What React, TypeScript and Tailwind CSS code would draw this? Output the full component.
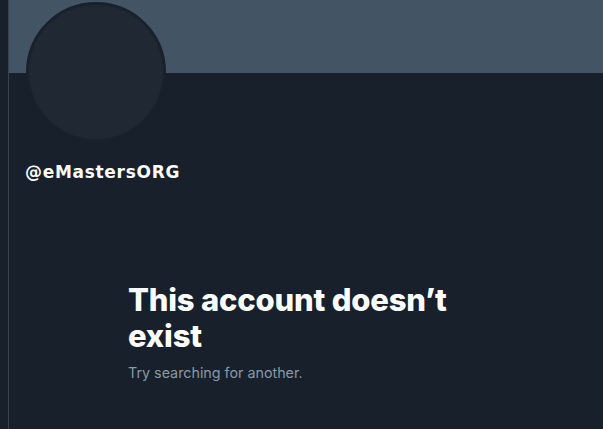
import React from 'react';

export default function App() {
  return (
    <div
      className="flex h-[429px] w-[603px] overflow-hidden bg-[#17202b] text-white"
      style={{ fontFamily: 'Inter, "Noto Sans", sans-serif' }}
    >
      <div className="w-[9px] shrink-0 border-r border-[#38444d] bg-[#17202b]" />
      <div className="flex flex-1 flex-col">
        <div className="h-[73px] bg-[#435565]" />
        <div className="ml-[17px] -mt-[71px] h-[140px] w-[140px] rounded-full border-[3px] border-[#18212c] bg-[#202833]" />
        <div
          className="ml-[16px] mt-[20px] text-[17px] font-bold leading-[20px] tracking-[0.7px]"
          style={{ fontFamily: '"DejaVu Sans", sans-serif' }}
        >
          @eMastersORG
        </div>
        <div className="ml-[119px] mt-[100px] w-[340px]">
          <h1 className="text-[31px] font-extrabold leading-[36px] tracking-[-0.2px]">This account doesn’t exist</h1>
          <p className="mt-[9px] text-[14.3px] leading-[20px] text-[#8b98a5]">Try searching for another.</p>
        </div>
      </div>
    </div>
  );
}
